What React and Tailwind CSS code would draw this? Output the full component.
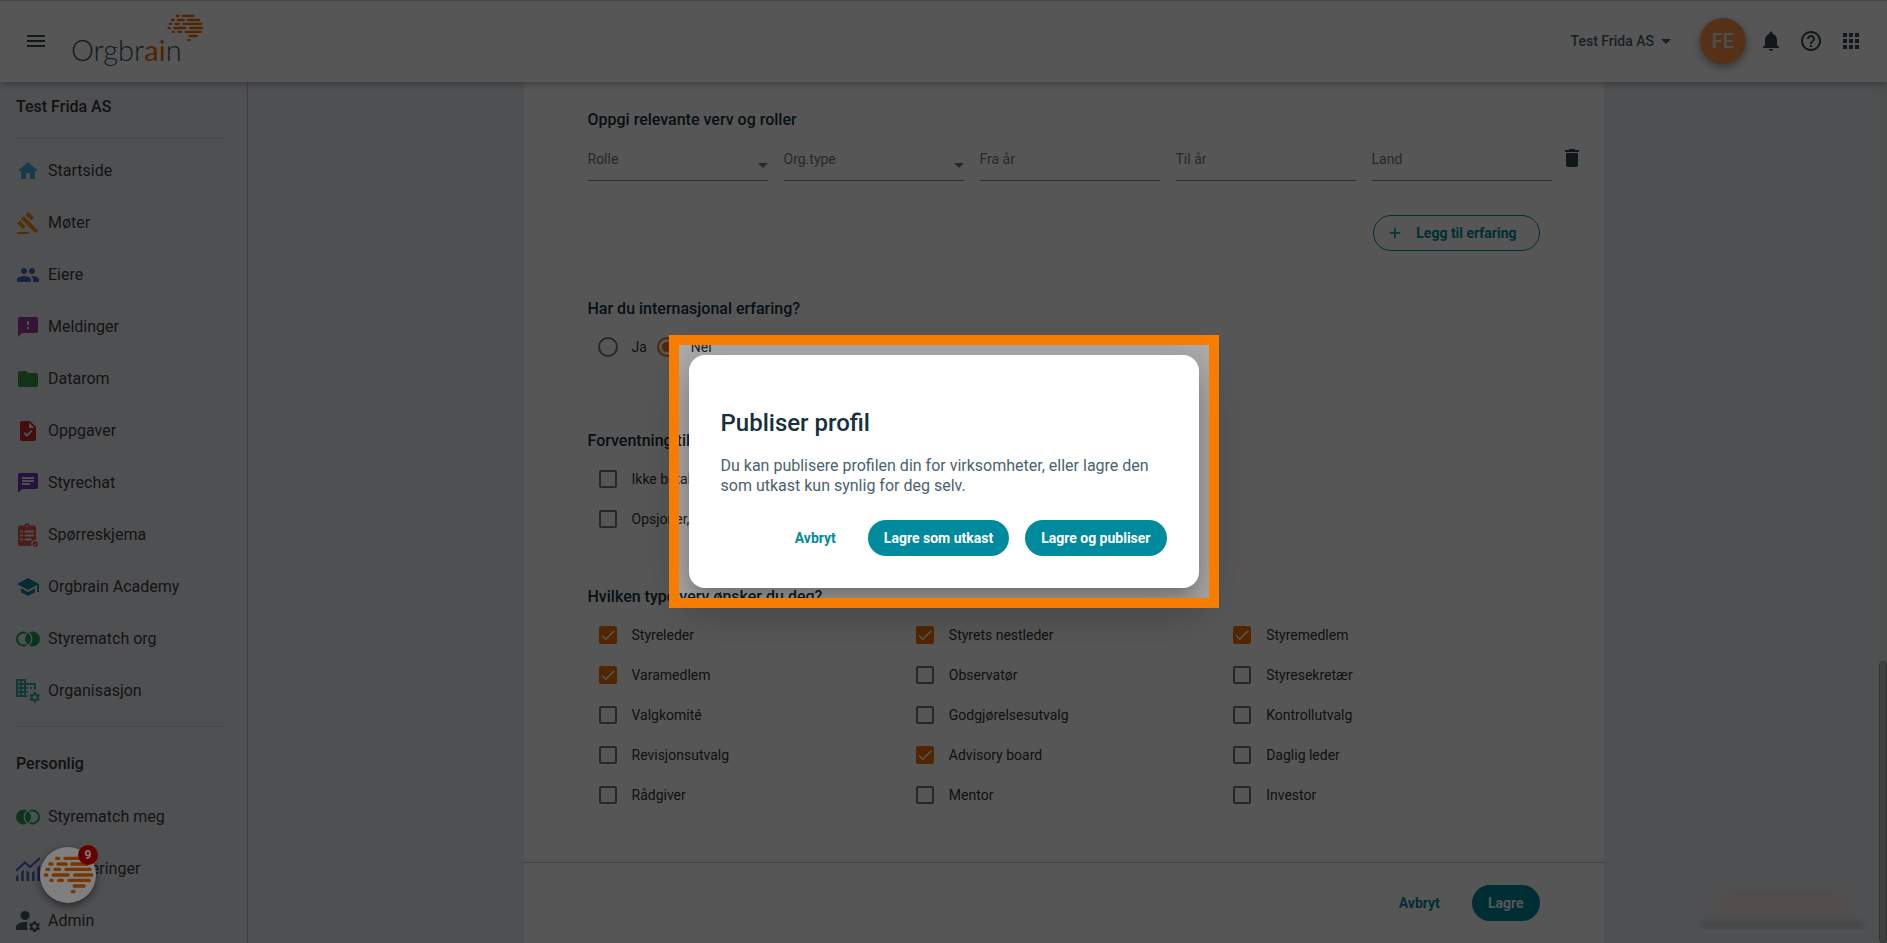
import React from "react";
import {
  MdHome, MdGavel, MdPeople, MdFeedback, MdFolder, MdTask, MdChat, MdSchool,
  MdNotifications, MdHelpOutline, MdApps, MdArrowDropDown, MdDelete, MdAdd, MdMenu, MdCheck,
} from "react-icons/md";

const GEAR =
  "M19.14 12.94c.04-.3.06-.61.06-.94 0-.32-.02-.64-.07-.94l2.03-1.58c.18-.14.23-.41.12-.61l-1.92-3.32c-.12-.22-.37-.29-.59-.22l-2.39.96c-.5-.38-1.03-.7-1.62-.94l-.36-2.54c-.04-.24-.24-.41-.48-.41h-3.84c-.24 0-.43.17-.47.41l-.36 2.54c-.59.24-1.13.57-1.62.94l-2.39-.96c-.22-.08-.47 0-.59.22L2.74 8.87c-.12.21-.08.47.12.61l2.03 1.58c-.05.3-.09.63-.09.94s.02.64.07.94l-2.03 1.58c-.18.14-.23.41-.12.61l1.92 3.32c.12.22.37.29.59.22l2.39-.96c.5.38 1.03.7 1.62.94l.36 2.54c.05.24.24.41.48.41h3.84c.24 0 .44-.17.47-.41l.36-2.54c.59-.24 1.13-.56 1.62-.94l2.39.96c.22.08.47 0 .59-.22l1.92-3.32c.12-.22.07-.47-.12-.61l-2.01-1.58zM12 15.6c-1.98 0-3.6-1.62-3.6-3.6s1.62-3.6 3.6-3.6 3.6 1.62 3.6 3.6-1.62 3.6-3.6 3.6z";

function BrainMark({ className }) {
  const bars = [
    [475, 164, 180], [475, 189, 241],
    [492, 144, 160], [492, 168, 202], [492, 210, 265],
    [508, 135, 150], [508, 159, 183], [508, 192, 274],
    [525, 130, 144], [525, 154, 208], [525, 218, 279],
    [541, 147, 160], [541, 170, 191], [541, 201, 272],
    [558, 217, 256],
    [575, 211, 226],
  ];
  return (
    <svg viewBox="128 468 153 114" className={className} fill="#f06c00" aria-hidden="true">
      {bars.map(([y, a, b]) => (
        <rect key={`${y}-${a}`} x={a} y={y - 5} width={b - a} height="10" rx="4.5" />
      ))}
    </svg>
  );
}

function MatchIcon({ className, flip }) {
  const id = flip ? "match-b" : "match-a";
  return (
    <svg viewBox="0 0 24 24" className={className} fill="currentColor" aria-hidden="true">
      <defs>
        <mask id={`${id}-l`}>
          <rect width="24" height="24" fill="#fff" />
          <circle cx="16.5" cy="12" r="8.8" fill="#000" />
        </mask>
        <mask id={`${id}-r`}>
          <rect width="24" height="24" fill="#fff" />
          <circle cx="7.5" cy="12" r="8.8" fill="#000" />
        </mask>
      </defs>
      <g transform={flip ? "matrix(-1 0 0 1 24 0)" : undefined}>
        <circle cx="7.5" cy="12" r="6.5" fill="none" stroke="currentColor" strokeWidth="2" mask={`url(#${id}-l)`} />
        <path d="M12 6a7.5 7.5 0 0 1 0 12a7.5 7.5 0 0 1 0-12z" />
        <circle cx="16.5" cy="12" r="7.5" mask={`url(#${id}-r)`} />
      </g>
    </svg>
  );
}

const MatchOrgIcon = (p) => <MatchIcon {...p} />;
const MatchMeIcon = (p) => <MatchIcon {...p} flip />;

function SurveyIcon({ className }) {
  return (
    <svg viewBox="0 0 24 24" className={className} fill="currentColor" aria-hidden="true">
      <rect x="2" y="2.5" width="18" height="20.5" rx="2" />
      <circle cx="11" cy="2.8" r="2.5" />
      <g fill="#ebeef4">
        <circle cx="11" cy="3.2" r="0.9" />
        <rect x="4.3" y="7.5" width="2.4" height="2" />
        <rect x="4.3" y="11.5" width="2.4" height="2" />
        <rect x="4.3" y="15.5" width="2.4" height="2" />
        <rect x="8.6" y="7.5" width="9.2" height="2" />
        <rect x="8.6" y="11.5" width="9.2" height="2" />
        <rect x="8.6" y="15.5" width="7" height="2" />
        <circle cx="19.4" cy="21" r="4.2" />
      </g>
      <circle cx="19.4" cy="21" r="2.8" />
      <path d="M18 21l1 1 1.9-1.9" fill="none" stroke="#ebeef4" strokeWidth="0.9" />
    </svg>
  );
}

function OrganisationIcon({ className }) {
  return (
    <svg viewBox="0 0 24 24" className={className} fill="currentColor" aria-hidden="true">
      <path
        transform="translate(-2 -3)"
        d="M12 7V3H2v18h20V7H12zM6 19H4v-2h2v2zm0-4H4v-2h2v2zm0-4H4V9h2v2zm0-4H4V5h2v2zm4 12H8v-2h2v2zm0-4H8v-2h2v2zm0-4H8V9h2v2zm0-4H8V5h2v2zm10 12h-8v-2h2v-2h-2v-2h2v-2h-2V9h8v10zm-2-8h-2v2h2v-2z"
      />
      <path d="M11.5 24V12.5l6-2H24V24z" fill="#ebeef4" />
      <path transform="translate(12.1 11.7) scale(.55)" d={GEAR} />
    </svg>
  );
}

function ChartIcon({ className }) {
  return (
    <svg viewBox="0 0 24 24" className={className} fill="currentColor" aria-hidden="true">
      <path d="M0 19.5l2.5-2.2V24H0zM5.2 15l2.6-2.4V24H5.2zM10.5 13l2.7 2.4V24h-2.7zM16 15.8l2.6-2.5V24H16zM21.4 10.5L24 8v16h-2.6z" />
      <path d="M0 13.8L9 5.5l5 4.6L24 1" fill="none" stroke="currentColor" strokeWidth="2.2" />
    </svg>
  );
}

function AdminIcon({ className }) {
  return (
    <svg viewBox="0 0 24 24" className={className} fill="currentColor" aria-hidden="true">
      <circle cx="9" cy="6.5" r="4.6" />
      <path d="M11.8 13.2C10.9 13 10 13 9 13c-3.6 0-9 1.700-9 5.200V21h12.300a8 8 0 0 1-.5-7.800z" />
      <path transform="translate(11.7 10.8) scale(.57)" d={GEAR} />
    </svg>
  );
}

const companyLinks = [
  { label: "Startside", icon: MdHome, color: "text-[#4bacdd]" },
  { label: "Møter", icon: MdGavel, color: "text-[#f98a12]" },
  { label: "Eiere", icon: MdPeople, color: "text-[#4866b8]" },
  { label: "Meldinger", icon: MdFeedback, color: "text-[#9c3f9c]" },
  { label: "Datarom", icon: MdFolder, color: "text-[#3d9641]" },
  { label: "Oppgaver", icon: MdTask, color: "text-[#c62828]" },
  { label: "Styrechat", icon: MdChat, color: "text-[#673ab7]" },
  { label: "Spørreskjema", icon: SurveyIcon, color: "text-[#e5544f]" },
  { label: "Orgbrain Academy", icon: MdSchool, color: "text-[#1a8199]" },
  { label: "Styrematch org", icon: MatchOrgIcon, color: "text-[#1fa15d]" },
  { label: "Organisasjon", icon: OrganisationIcon, color: "text-[#35a99c]" },
];

const personalLinks = [
  { label: "Styrematch meg", icon: MatchMeIcon, color: "text-[#1fa15d]" },
  { label: "Investeringer", icon: ChartIcon, color: "text-[#5069cc]" },
  { label: "Admin", icon: AdminIcon, color: "text-[#455a64]" },
];

function NavList({ items }) {
  return (
    <ul>
      {items.map(({ label, icon: Icon, color }) => (
        <li key={label}>
          <a href="#" className="flex h-13 items-center gap-2 px-4 text-base text-[#3c3c3c]">
            <Icon className={`size-6 shrink-0 ${color}`} />
            {label}
          </a>
        </li>
      ))}
    </ul>
  );
}

function Field({ id, label, select }) {
  return (
    <div className="relative grid h-[41px] flex-1 border-b border-[#8c8c8c] text-sm text-[#777]">
      <label htmlFor={id} className="flex items-center pb-0.5 [grid-area:1/1]">{label}</label>
      {select ? (
        <>
          <select id={id} defaultValue="" className="w-full appearance-none bg-transparent outline-none [grid-area:1/1]">
            <option value="" />
          </select>
          <MdArrowDropDown className="pointer-events-none absolute -right-[7px] top-[13px] size-6" />
        </>
      ) : (
        <input id={id} type="text" className="w-full bg-transparent outline-none [grid-area:1/1]" />
      )}
    </div>
  );
}

function Check({ label, checked }) {
  return (
    <label className="flex h-10 items-center gap-[15px] pl-[11px] text-sm text-[#333]">
      <span className="grid size-[18px] shrink-0">
        <input
          type="checkbox"
          defaultChecked={checked}
          className="peer size-[18px] appearance-none rounded-xs border-2 border-[#757575] [grid-area:1/1] checked:border-[#f27200] checked:bg-[#f27200]"
        />
        <MdCheck className="pointer-events-none hidden size-[18px] text-white [grid-area:1/1] peer-checked:block" />
      </span>
      {label}
    </label>
  );
}

function Radio({ label, checked }) {
  return (
    <label className="flex items-center gap-3.5 text-sm text-[#333]">
      <span className="grid size-5 shrink-0 place-items-center">
        <input
          type="radio"
          name="international"
          defaultChecked={checked}
          className="peer size-5 appearance-none rounded-full border-2 border-[#757575] [grid-area:1/1] checked:border-[#f27200]"
        />
        <span className="pointer-events-none hidden size-2.5 rounded-full bg-[#f27200] [grid-area:1/1] peer-checked:block" />
      </span>
      {label}
    </label>
  );
}

const Heading = ({ children }) => (
  <h2 className="text-base/6 font-medium text-[#16303d]">{children}</h2>
);

const positions = [
  ["Styreleder", true], ["Styrets nestleder", true], ["Styremedlem", true],
  ["Varamedlem", true], ["Observatør", false], ["Styresekretær", false],
  ["Valgkomité", false], ["Godgjørelsesutvalg", false], ["Kontrollutvalg", false],
  ["Revisjonsutvalg", false], ["Advisory board", true], ["Daglig leder", false],
  ["Rådgiver", false], ["Mentor", false], ["Investor", false],
];

const textButton = "h-9 rounded-full px-4 text-sm font-bold text-[#008a9d]";
const solidButton = "h-9 rounded-full bg-[#008a9d] px-4 text-sm font-bold text-white";

export default function App() {
  return (
    <div className="relative flex h-screen flex-col overflow-hidden bg-[#ebeef4] font-['Roboto',sans-serif]">
      <header className="relative z-10 flex h-[82px] shrink-0 items-center justify-between border-t border-[#d0d0d0] bg-white px-6 pb-px shadow-[0_2px_8px_rgba(0,0,0,0.3)]">
        <div className="flex items-center gap-[23px]">
          <button type="button" aria-label="Meny" className="text-[#37474f]">
            <MdMenu className="size-6" />
          </button>
          <a href="#" className="relative pt-[18px] font-['Lato',sans-serif] text-[29px]/[36px] font-light text-[#37535f]">
            Orgbr<span className="font-normal text-[#f06c00]">ai</span>n
            <BrainMark className="absolute top-0 left-[96px] h-7 w-[37px]" />
          </a>
        </div>
        <div className="flex items-center gap-4 text-[#37474f]">
          <button type="button" className="mr-1.5 flex items-center text-sm font-medium text-[#455f6b]">
            Test Frida AS
            <MdArrowDropDown className="size-6" />
          </button>
          <button type="button" className="mr-[-3px] size-[46px] rounded-full bg-[#fa9145] text-xl font-medium text-[#e8e8e8] shadow-[0_3px_8px_rgba(0,0,0,0.4)]">
            FE
          </button>
          <button type="button" aria-label="Varsler"><MdNotifications className="size-6" /></button>
          <button type="button" aria-label="Hjelp"><MdHelpOutline className="size-6" /></button>
          <button type="button" aria-label="Apper"><MdApps className="size-6" /></button>
        </div>
      </header>

      <div className="flex min-h-0 flex-1">
        <nav className="w-62 shrink-0 overflow-hidden border-r border-[#bdbdbd]">
          <h2 className="px-4 pt-[13px] text-base/6 font-medium text-[#333]">Test Frida AS</h2>
          <hr className="mb-1.5 ml-4 mr-[23px] mt-[19px] border-[#d3d6da]" />
          <NavList items={companyLinks} />
          <hr className="ml-4 mr-[23px] mt-[9px] border-[#d3d6da]" />
          <h2 className="mb-[15px] mt-[25px] px-4 text-base/6 font-medium text-[#333]">Personlig</h2>
          <NavList items={personalLinks} />
        </nav>

        <main className="flex min-w-0 flex-1 flex-col overflow-hidden">
          <form className="mx-auto flex w-full max-w-[1080px] flex-1 flex-col bg-white">
            <div className="flex-1 px-16 pt-[26px]">
              <section>
                <Heading>Oppgi relevante verv og roller</Heading>
                <div className="-mr-11 mt-2 flex gap-4">
                  <Field id="role" label="Rolle" select />
                  <Field id="orgtype" label="Org.type" select />
                  <Field id="from" label="Fra år" />
                  <Field id="to" label="Til år" />
                  <Field id="country" label="Land" />
                  <button type="button" aria-label="Slett" className="-ml-2 h-9 text-[#37474f]">
                    <MdDelete className="size-6" />
                  </button>
                </div>
                <div className="mt-[34px] flex justify-end">
                  <button type="button" className="flex h-9 items-center gap-3 rounded-full border border-[#008a9d] pl-3 pr-[22px] text-sm font-bold text-[#008a9d]">
                    <MdAdd className="size-[18px]" />
                    Legg til erfaring
                  </button>
                </div>
              </section>
              <section className="mt-[46px]">
                <Heading>Har du internasjonal erfaring?</Heading>
                <div className="mt-1.5 flex h-10 items-center gap-2.5 pl-2.5">
                  <Radio label="Ja" />
                  <Radio label="Nei" checked />
                </div>
              </section>
              <section className="mt-[62px]">
                <Heading>Forventning til honorar</Heading>
                <div className="mt-1.5">
                  <Check label="Ikke betalt" />
                  <Check label="Opsjoner, aksjer" />
                </div>
              </section>
              <section className="mt-[46px]">
                <Heading>Hvilken type verv ønsker du deg?</Heading>
                <div className="mt-1.5 grid grid-cols-3">
                  {positions.map(([label, checked]) => (
                    <Check key={label} label={label} checked={checked} />
                  ))}
                </div>
              </section>
            </div>
            <div className="flex justify-end gap-4 border-t border-[#ccc] px-16 py-[22px] shadow-[0_-1px_4px_rgba(0,0,0,0.08)]">
              <button type="button" className={textButton}>Avbryt</button>
              <button type="submit" className={solidButton}>Lagre</button>
            </div>
          </form>
        </main>

        <div className="flex w-2 shrink-0 flex-col justify-end bg-[#e3e6e6]" aria-hidden="true">
          <div className="h-[282px] rounded-full border border-[#8a9499] bg-[#bdbdbd]" />
        </div>
      </div>

      <div className="absolute bottom-3.5 right-5 w-[170px] overflow-hidden" aria-hidden="true">
        <div className="mx-4 mt-2 h-6 rounded-full bg-[#ffd8c8] opacity-50 blur-[6px]" />
        <div className="mx-1 mt-1.5 h-2 bg-[#b4b8be] opacity-60 blur-[3px]" />
      </div>

      <div className="absolute inset-0 z-20 bg-black/32" />

      <button type="button" aria-label="Assistent" className="absolute bottom-10 left-10 z-20 grid size-14 place-items-center rounded-full bg-white shadow-[0_3px_8px_rgba(0,0,0,0.5)]">
        <BrainMark className="h-[38px] w-[51px]" />
        <span className="absolute -right-0.5 -top-0.5 grid size-5 place-items-center rounded-full bg-[#cc0000] text-xs font-bold text-white">
          9
        </span>
      </button>

      <div className="absolute inset-0 z-30 grid place-items-center">
        <div
          role="dialog"
          aria-modal="true"
          aria-labelledby="dialog-title"
          className="relative w-[510px] rounded-2xl bg-white px-8 pb-8 pt-13 shadow-[0_11px_15px_-7px_rgba(0,0,0,0.2),0_24px_38px_3px_rgba(0,0,0,0.14),0_9px_46px_8px_rgba(0,0,0,0.12)]"
        >
          <h1 id="dialog-title" className="text-2xl/8 font-medium text-[#16303d]">Publiser profil</h1>
          <p className="mt-[17px] text-base/5 text-[#4a626e]">
            Du kan publisere profilen din for virksomheter, eller lagre den som utkast kun synlig for deg selv.
          </p>
          <div className="mt-6 flex justify-end gap-4">
            <button type="button" className={textButton}>Avbryt</button>
            <button type="button" className={solidButton}>Lagre som utkast</button>
            <button type="button" className={solidButton}>Lagre og publiser</button>
          </div>
          <div className="pointer-events-none absolute -inset-5 border-10 border-[#f77d00] shadow-[0_0_0_2000px_rgba(0,0,0,0.5)]" />
        </div>
      </div>
    </div>
  );
}
